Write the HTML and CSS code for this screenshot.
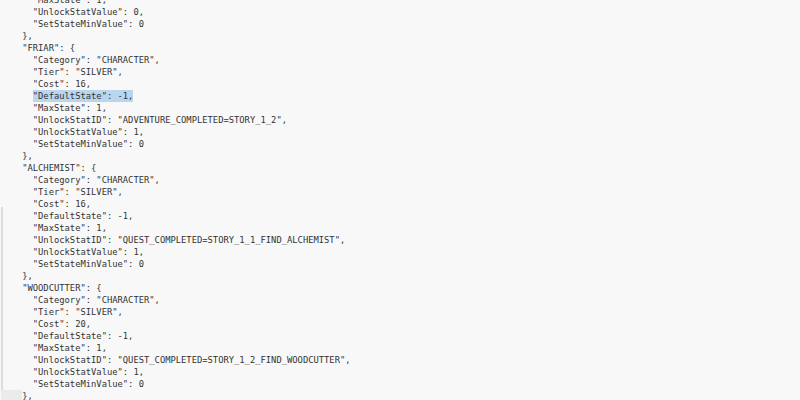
FILE: index.html
```html
<!DOCTYPE html>
<html>
<head>
<meta charset="utf-8">
<link rel="stylesheet" href="styles.css">
</head>
<body>
<div class="editor">
  <div class="gutter"><div class="gutter-bar"></div></div>
<pre class="code">      "MaxState": 1,
      "UnlockStatValue": 0,
      "SetStateMinValue": 0
    },
    "FRIAR": {
      "Category": "CHARACTER",
      "Tier": "SILVER",
      "Cost": 16,
      <span class="sel">"DefaultState": -1,</span>
      "MaxState": 1,
      "UnlockStatID": "ADVENTURE_COMPLETED=STORY_1_2",
      "UnlockStatValue": 1,
      "SetStateMinValue": 0
    },
    "ALCHEMIST": {
      "Category": "CHARACTER",
      "Tier": "SILVER",
      "Cost": 16,
      "DefaultState": -1,
      "MaxState": 1,
      "UnlockStatID": "QUEST_COMPLETED=STORY_1_1_FIND_ALCHEMIST",
      "UnlockStatValue": 1,
      "SetStateMinValue": 0
    },
    "WOODCUTTER": {
      "Category": "CHARACTER",
      "Tier": "SILVER",
      "Cost": 20,
      "DefaultState": -1,
      "MaxState": 1,
      "UnlockStatID": "QUEST_COMPLETED=STORY_1_2_FIND_WOODCUTTER",
      "UnlockStatValue": 1,
      "SetStateMinValue": 0
<span class="ws">    </span>},</pre>
</div>
</body>
</html>
```
FILE: styles.css
```css
html, body {
  margin: 0;
  padding: 0;
  background: #f8f8f8;
  width: 800px;
  height: 400px;
  overflow: hidden;
}
.editor {
  display: flex;
  height: 400px;
}
.gutter {
  width: 0;
  display: flex;
  flex-direction: column;
}
.gutter-bar {
  margin-top: 207px;
  margin-left: 1px;
  width: 2px;
  flex: 1;
  background: #dcdcdc;
}
.code {
  margin: -6px 0 0 1px;
  padding: 0;
  font-family: "DejaVu Sans Mono", monospace;
  font-size: 8.8px;
  line-height: 12px;
  color: #333333;
  white-space: pre;
}
.sel {
  background: #b9d5ef;
  padding: 1px 0;
}
.ws {
  background: #ebebeb;
  padding: 1px 0 2px 0;
}
```
